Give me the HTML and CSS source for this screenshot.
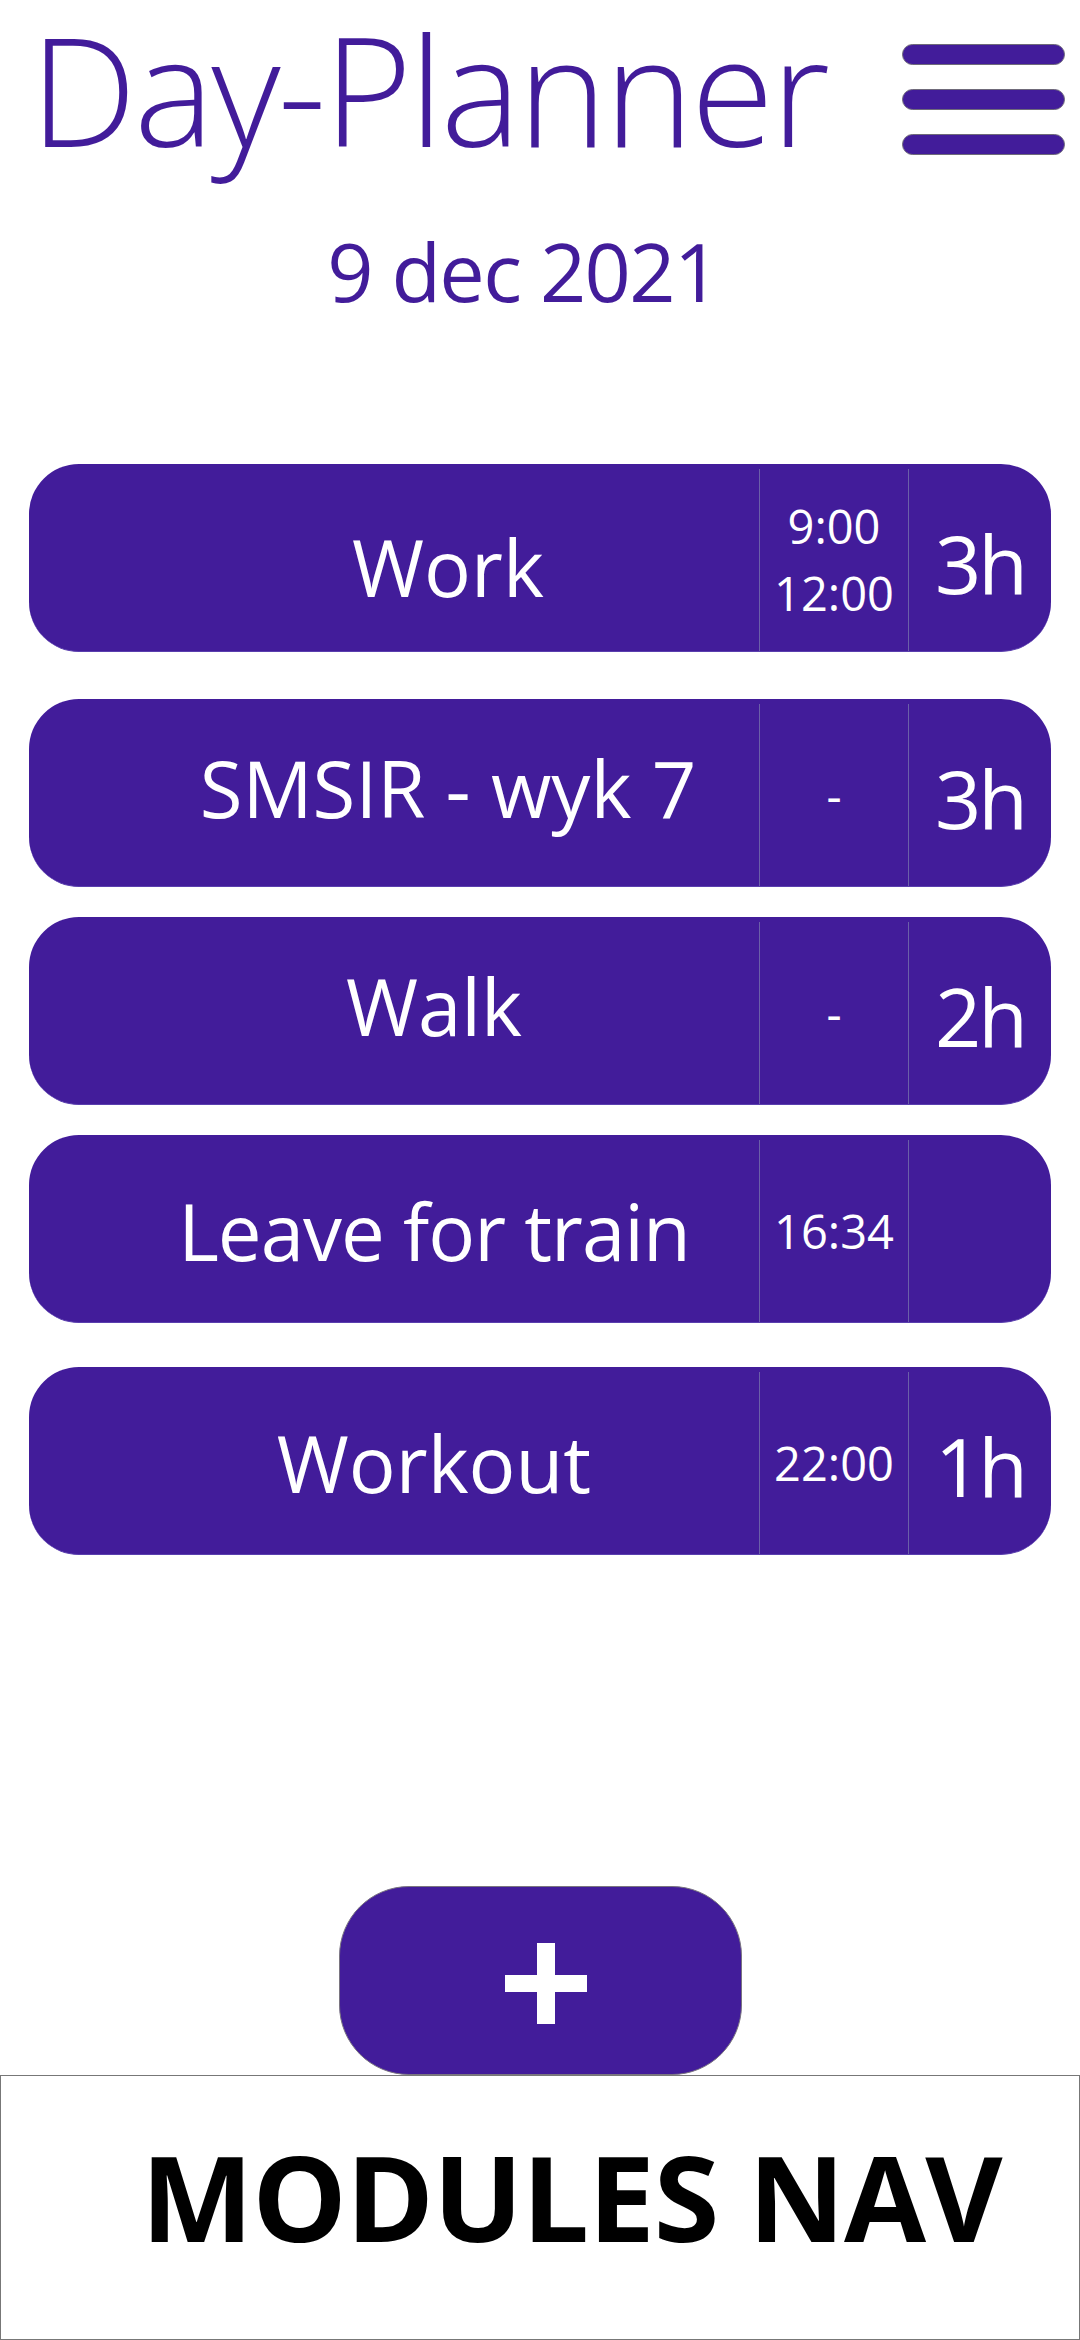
FILE: index.html
```html
<!DOCTYPE html>
<html lang="en">
<head>
<meta charset="utf-8">
<title>Day-Planner</title>
<link rel="stylesheet" href="styles.css">
</head>
<body>
<div class="page">
  <header class="top">
    <h1 class="title">Day-Planner</h1>
    <button class="menu" aria-label="Menu">
      <span class="bar"></span>
      <span class="bar"></span>
      <span class="bar"></span>
    </button>
  </header>
  <p class="date">9 dec 2021</p>

  <main class="list">
    <article class="card">
      <div class="cell cell-title title-low title-right">Work</div>
      <div class="cell cell-time"><span>9:00</span><span>12:00</span></div>
      <div class="cell cell-dur">3h</div>
    </article>
    <article class="card card-gap-l">
      <div class="cell cell-title title-high title-right">SMSIR - wyk 7</div>
      <div class="cell cell-time"><span>-</span></div>
      <div class="cell cell-dur">3h</div>
    </article>
    <article class="card card-gap-s">
      <div class="cell cell-title title-high">Walk</div>
      <div class="cell cell-time"><span>-</span></div>
      <div class="cell cell-dur">2h</div>
    </article>
    <article class="card card-gap-s">
      <div class="cell cell-title title-tight">Leave for train</div>
      <div class="cell cell-time"><span>16:34</span></div>
      <div class="cell cell-dur"></div>
    </article>
    <article class="card card-gap-m">
      <div class="cell cell-title">Workout</div>
      <div class="cell cell-time"><span>22:00</span></div>
      <div class="cell cell-dur">1h</div>
    </article>
  </main>

  <div class="add-wrap">
    <button class="add" aria-label="Add">
      <svg class="plus" width="82" height="81" viewBox="0 0 82 81">
        <rect x="32" y="0" width="18" height="81" fill="#fff"/>
        <rect x="0" y="32" width="82" height="17" fill="#fff"/>
      </svg>
    </button>
  </div>

  <nav class="modules">MODULES NAV</nav>
</div>
</body>
</html>
```

FILE: styles.css
```css
* {
  box-sizing: border-box;
}

html, body {
  margin: 0;
  padding: 0;
  background: #ffffff;
}

body {
  font-family: "Open Sans", "Noto Sans", "Liberation Sans", sans-serif;
  color: #421c9a;
}

.page {
  width: 1080px;
  height: 2340px;
  display: flex;
  flex-direction: column;
  overflow: hidden;
}

.top {
  display: flex;
  justify-content: space-between;
  align-items: flex-start;
  padding: 0 15px 0 30px;
}

.title {
  margin: 0;
  padding-right: 4px;
  flex-shrink: 0;
  font-size: 151px;
  line-height: 177px;
  font-weight: 300;
  letter-spacing: -2.7px;
  color: #421c9a;
  white-space: nowrap;
}

.menu {
  margin: 44px 0 0 0;
  padding: 0;
  border: 0;
  background: transparent;
  width: 163px;
  flex-shrink: 0;
  display: flex;
  flex-direction: column;
  gap: 24px;
}

.bar {
  display: block;
  width: 163px;
  height: 21px;
  border-radius: 11px;
  background: #421c9a;
  border: 1px solid #6f6a7a;
}

.date {
  margin: 53px 0 0 0;
  padding-right: 34px;
  font-size: 81px;
  line-height: 81px;
  letter-spacing: -1.6px;
  text-align: center;
  color: #421c9a;
}

.list {
  margin-top: 153px;
  padding: 0 29px;
  display: flex;
  flex-direction: column;
}

.card {
  height: 188px;
  width: 1022px;
  padding-top: 5px;
  border-radius: 50px;
  background: #421c9a;
  border-bottom: 1px solid #5a3fae;
  color: #ffffff;
  display: grid;
  grid-template-columns: 730px 149px 1fr;
}

.card-gap-l {
  margin-top: 47px;
}

.card-gap-s {
  margin-top: 30px;
}

.card-gap-m {
  margin-top: 44px;
}

.cell {
  display: flex;
  flex-direction: column;
  align-items: center;
  justify-content: center;
  white-space: nowrap;
}

.cell-title {
  padding-left: 80px;
  font-size: 78px;
  line-height: 1;
}

.title-right {
  padding-left: 108px;
}

.title-tight {
  letter-spacing: -1px;
}

.title-low {
  padding-top: 14px;
}

.title-high {
  padding-bottom: 14px;
}

.cell-time {
  border-left: 1px solid #6b5fa8;
  font-size: 47px;
  line-height: 67px;
}

.cell-dur {
  border-left: 1px solid #6b5fa8;
  font-size: 81px;
  line-height: 1;
  letter-spacing: -3px;
  padding-top: 4px;
}

.add-wrap {
  margin-top: auto;
  display: flex;
  justify-content: center;
}

.add {
  width: 403px;
  height: 189px;
  margin: 0;
  padding: 6px 0 0 11px;
  border: 1px solid #7a7580;
  border-radius: 70px;
  background: #421c9a;
  display: flex;
  align-items: center;
  justify-content: center;
}

.plus {
  display: block;
}

.modules {
  height: 265px;
  border: 1px solid #777777;
  padding: 61px 0 0 140px;
  font-size: 119px;
  line-height: 119px;
  font-weight: 700;
  letter-spacing: -1px;
  color: #000000;
  white-space: nowrap;
}
```
